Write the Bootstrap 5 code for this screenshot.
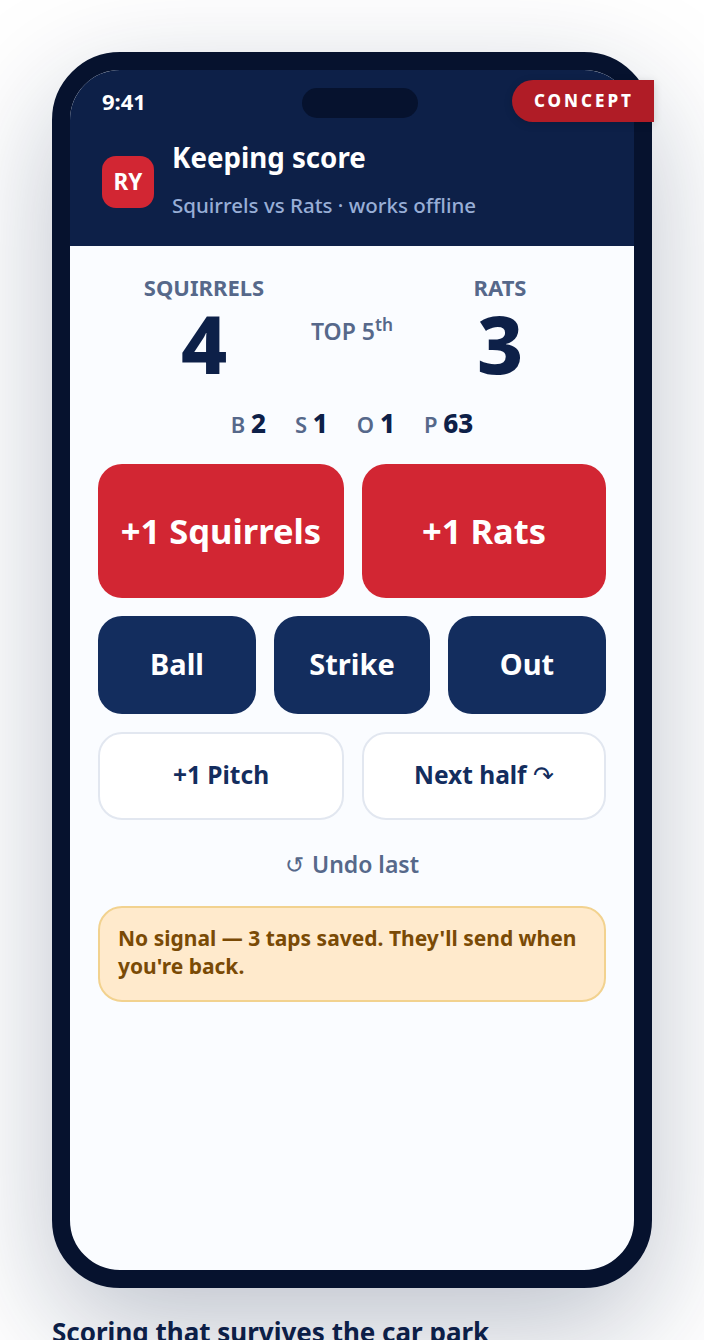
<!DOCTYPE html>
<html lang="en">
<head>
    <meta charset="UTF-8">
    <meta name="viewport" content="width=device-width, initial-scale=1.0">
    <title>Keeping score</title>
    <link href="https://cdn.jsdelivr.net/npm/bootstrap@5.3.0/dist/css/bootstrap.min.css" rel="stylesheet">
    <style>
        body {
            background: #fff;
            font-family: "Noto Sans", sans-serif;
            color: #0d2048;
            overflow: hidden;
            height: 1340px;
        }
        .page-wrap {
            padding: 52px 52px 0;
            height: 1340px;
        }
        .phone {
            position: relative;
            height: 1236px;
            border: 18px solid #06122e;
            border-radius: 68px;
            background: #fafcff;
            box-shadow: 0 40px 120px rgba(10, 31, 68, .27);
        }
        .phone-inner {
            height: 100%;
            border-radius: 50px;
            overflow: hidden;
            display: flex;
            flex-direction: column;
        }
        .app-head {
            background: #0d2048;
            color: #fff;
            height: 176px;
            padding: 0 32px;
        }
        .status-bar {
            height: 69px;
            padding-top: 16px;
            font-size: 22px;
            font-weight: 700;
            line-height: 30px;
        }
        .notch {
            position: absolute;
            left: 232px;
            top: 18px;
            width: 116px;
            height: 30px;
            border-radius: 15px;
            background: #06122e;
        }
        .concept-tag {
            position: absolute;
            top: 10px;
            right: -20px;
            width: 142px;
            height: 42px;
            padding-left: 2px;
            border-radius: 21px 0 0 21px;
            background: #b01c26;
            color: #fff;
            font-size: 17px;
            font-weight: 800;
            letter-spacing: 3px;
            box-shadow: 0 2px 8px rgba(0, 0, 0, .15);
        }
        .head-row {
            gap: 18px;
        }
        .ry-mark {
            width: 52px;
            height: 52px;
            margin-top: 17px;
            border-radius: 14px;
            background: #d22633;
            font-size: 22.5px;
            font-weight: 700;
        }
        .head-title {
            font-size: 27.7px;
            font-weight: 700;
            line-height: 36px;
            margin: 0 0 16px;
        }
        .head-sub {
            font-size: 20.5px;
            font-weight: 500;
            line-height: 28px;
            color: #98aed6;
        }
        .app-body {
            flex: 1;
            padding: 26px 28px 0;
        }
        .score-row {
            height: 121px;
        }
        .team-col {
            width: 212px;
        }
        .team-name {
            font-size: 22px;
            font-weight: 700;
            line-height: 30px;
            margin-bottom: 1px;
            color: #56688a;
        }
        .team-score {
            font-size: 80px;
            font-weight: 800;
            line-height: 80px;
        }
        .inning {
            flex: 1;
            padding-top: 41px;
            font-size: 23px;
            font-weight: 600;
            line-height: 36px;
            color: #56688a;
            text-align: center;
        }
        .count-row {
            height: 60px;
            margin-bottom: 11px;
            gap: 29px;
            font-size: 22px;
            font-weight: 600;
            color: #56688a;
        }
        .count-row b {
            font-size: 26px;
            font-weight: 800;
            color: #0d2048;
        }
        .btn-stack {
            gap: 18px;
        }
        .btn-row-two {
            display: grid;
            grid-template-columns: 246fr 244fr;
            gap: 18px;
        }
        .btn-row-three {
            display: grid;
            grid-template-columns: 158fr 156fr 158fr;
            gap: 18px;
        }
        .score-btn,
        .call-btn,
        .plain-btn {
            --bs-btn-border-width: 0;
            font-weight: 700;
        }
        .score-btn {
            height: 134px;
            border-radius: 24px;
            font-size: 34.5px;
            background: #d22633;
            color: #fff;
        }
        .call-btn {
            height: 98px;
            padding-bottom: 8px;
            border-radius: 24px;
            font-size: 29px;
            background: #132d5e;
            color: #fff;
        }
        .plain-btn {
            height: 88px;
            padding-bottom: 8px;
            border-radius: 24px;
            font-size: 24.5px;
            background: #fff;
            color: #132d5e;
            border: 2px solid #e2e7f0;
        }
        .thin-glyph {
            font-weight: 400;
        }
        .undo-glyph {
            font-weight: 400;
            margin-right: 2px;
        }
        .undo-line {
            height: 86px;
            padding-top: 2px;
            font-size: 23px;
            font-weight: 600;
            color: #56688a;
        }
        .offline-note {
            border: 2px solid #f2d28f;
            border-radius: 24px;
            background: #ffeacc;
            color: #7a4a05;
            padding: 16px 18px 20px;
            font-size: 21px;
            font-weight: 700;
            line-height: 28px;
        }
        .caption {
            margin: 28px 0 0;
            font-size: 26px;
            font-weight: 700;
            line-height: 32px;
            color: #0d2048;
            white-space: nowrap;
        }
    </style>
</head>
<body>
    <div class="page-wrap">
        <div class="phone">
            <div class="phone-inner">
                <!-- Header -->
                <div class="app-head">
                    <div class="status-bar">9:41</div>
                    <div class="d-flex align-items-start head-row">
                        <div class="ry-mark d-flex align-items-center justify-content-center">RY</div>
                        <div>
                            <h1 class="head-title">Keeping score</h1>
                            <div class="head-sub">Squirrels vs Rats · works offline</div>
                        </div>
                    </div>
                </div>

                <!-- Scoreboard and buttons -->
                <div class="app-body">
                    <div class="score-row d-flex">
                        <div class="team-col text-center">
                            <div class="team-name">SQUIRRELS</div>
                            <div class="team-score">4</div>
                        </div>
                        <div class="inning">TOP 5<sup>th</sup></div>
                        <div class="team-col text-center">
                            <div class="team-name">RATS</div>
                            <div class="team-score">3</div>
                        </div>
                    </div>
                    <div class="count-row d-flex justify-content-center align-items-center">
                        <span>B <b>2</b></span>
                        <span>S <b>1</b></span>
                        <span>O <b>1</b></span>
                        <span>P <b>63</b></span>
                    </div>
                    <div class="btn-stack d-flex flex-column">
                        <div class="btn-row-two">
                            <button type="button" class="btn score-btn">+1 Squirrels</button>
                            <button type="button" class="btn score-btn">+1 Rats</button>
                        </div>
                        <div class="btn-row-three">
                            <button type="button" class="btn call-btn">Ball</button>
                            <button type="button" class="btn call-btn">Strike</button>
                            <button type="button" class="btn call-btn">Out</button>
                        </div>
                        <div class="btn-row-two">
                            <button type="button" class="btn plain-btn">+1 Pitch</button>
                            <button type="button" class="btn plain-btn">Next half <span class="thin-glyph">↷</span></button>
                        </div>
                    </div>
                    <div class="undo-line d-flex align-items-center justify-content-center"><span><span class="undo-glyph">↺</span> Undo last</span></div>
                    <div class="offline-note">No signal — 3 taps saved. They'll send when you're back.</div>
                </div>
            </div>
            <div class="notch"></div>
            <div class="concept-tag d-flex align-items-center justify-content-center">CONCEPT</div>
        </div>
        <p class="caption">Scoring that survives the car park</p>
    </div>
    <script src="https://cdn.jsdelivr.net/npm/bootstrap@5.3.0/dist/js/bootstrap.bundle.min.js"></script>
</body>
</html>
